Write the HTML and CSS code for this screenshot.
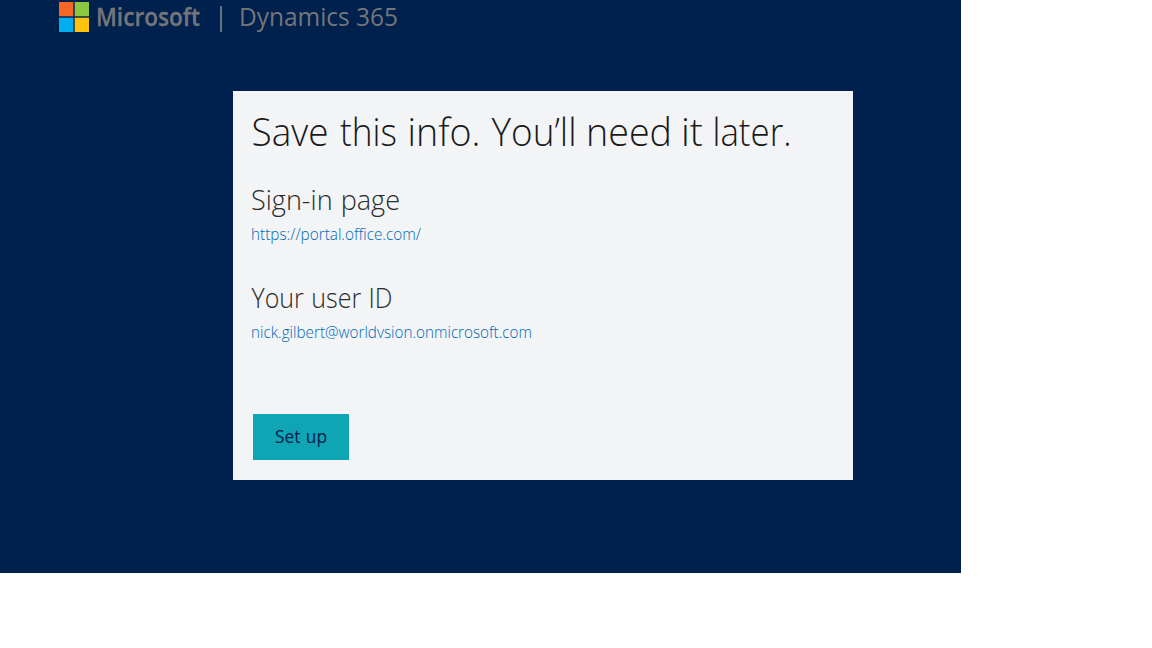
FILE: index.html
```html
<!DOCTYPE html>
<html lang="en">
<head>
<meta charset="utf-8">
<title>Dynamics 365</title>
<link rel="stylesheet" href="styles.css">
</head>
<body>
<main class="stage">
  <header class="brand">
    <svg class="logo" viewBox="0 0 30 30" width="30" height="30"><path fill="#f76624" d="M0 0h14.3v14.3H0z"/><path fill="#8dc63f" d="M15.7 0H30v14.3H15.7z"/><path fill="#00adef" d="M0 15.7h14.3V30H0z"/><path fill="#ffc20e" d="M15.7 15.7H30V30H15.7z"/></svg>
    <svg class="wordmark" width="104" height="32"><text class="word" x="-1" y="24" textLength="104" lengthAdjust="spacingAndGlyphs">Microsoft</text></svg>
    <span class="divider"></span>
    <svg class="product" width="160" height="32"><text class="prod" x="-1" y="24" textLength="159" lengthAdjust="spacingAndGlyphs">Dynamics 365</text></svg>
  </header>
  <section class="card">
    <svg class="line title" width="560" height="56"><text x="0" y="42"><tspan x="0.5" textLength="77" lengthAdjust="spacingAndGlyphs">Save</tspan> <tspan x="89" textLength="57" lengthAdjust="spacingAndGlyphs">this</tspan> <tspan x="156.5" textLength="73" lengthAdjust="spacingAndGlyphs">info.</tspan> <tspan x="240.5" textLength="85" lengthAdjust="spacingAndGlyphs">You’ll</tspan> <tspan x="335" textLength="86" lengthAdjust="spacingAndGlyphs">need</tspan> <tspan x="430" textLength="22" lengthAdjust="spacingAndGlyphs">it</tspan> <tspan x="461.5" textLength="79" lengthAdjust="spacingAndGlyphs">later.</tspan></text></svg>
    <svg class="line heading" width="300" height="40"><text x="0" y="29" textLength="149" lengthAdjust="spacingAndGlyphs">Sign-in page</text></svg>
    <svg class="line link" width="300" height="24"><text x="0" y="17" textLength="170" lengthAdjust="spacingAndGlyphs">https://portal.office.com/</text></svg>
    <svg class="line heading second" width="300" height="40"><text x="0.5" y="29" textLength="141" lengthAdjust="spacingAndGlyphs">Your user ID</text></svg>
    <svg class="line link" width="300" height="24"><text x="0" y="17" textLength="281" lengthAdjust="spacingAndGlyphs">nick.gilbert@worldvsion.onmicrosoft.com</text></svg>
    <button class="setup" type="button"><svg width="52" height="24"><text x="0" y="18" textLength="52" lengthAdjust="spacingAndGlyphs">Set up</text></svg></button>
  </section>
</main>
</body>
</html>
```
FILE: styles.css
```css
body { margin: 0; background: #fff; font-family: "Open Sans", "Noto Sans", sans-serif; }
svg { display: block; overflow: visible; }
.stage { box-sizing: border-box; width: 961px; height: 573px; background: #00204e; padding: 2px 0 0 59px; }
.brand { display: flex; height: 32px; }
.logo { margin-right: 8px; }
.word { font-size: 25px; font-weight: 600; fill: #747679; stroke: #747679; stroke-width: 0.3px; }
.divider { width: 2px; height: 26px; margin: 4px 18px 0 19px; background: #66707c; }
.prod { font-size: 25px; fill: #747679; }
.card { box-sizing: border-box; width: 620px; height: 389px; margin: 57px 0 0 174px; padding: 13px 18px 0; background: #f2f4f6; }
.title { font-size: 39px; font-weight: 300; fill: #1a1a1a; }
.heading { margin-top: 21px; font-size: 27px; font-weight: 300; fill: #2b2b2b; word-spacing: 1px; }
.second { margin-top: 32px; }
.link { font-size: 15.5px; font-weight: 300; fill: #0067b8; margin-top: 2px; }
.setup { display: flex; align-items: center; justify-content: center; width: 96px; height: 46px; margin: 69px 0 0 2px; padding: 0; border: 0; background: #0fa5b5; font: 400 17.5px "Open Sans", sans-serif; word-spacing: 1px; fill: #00204e; }
```
